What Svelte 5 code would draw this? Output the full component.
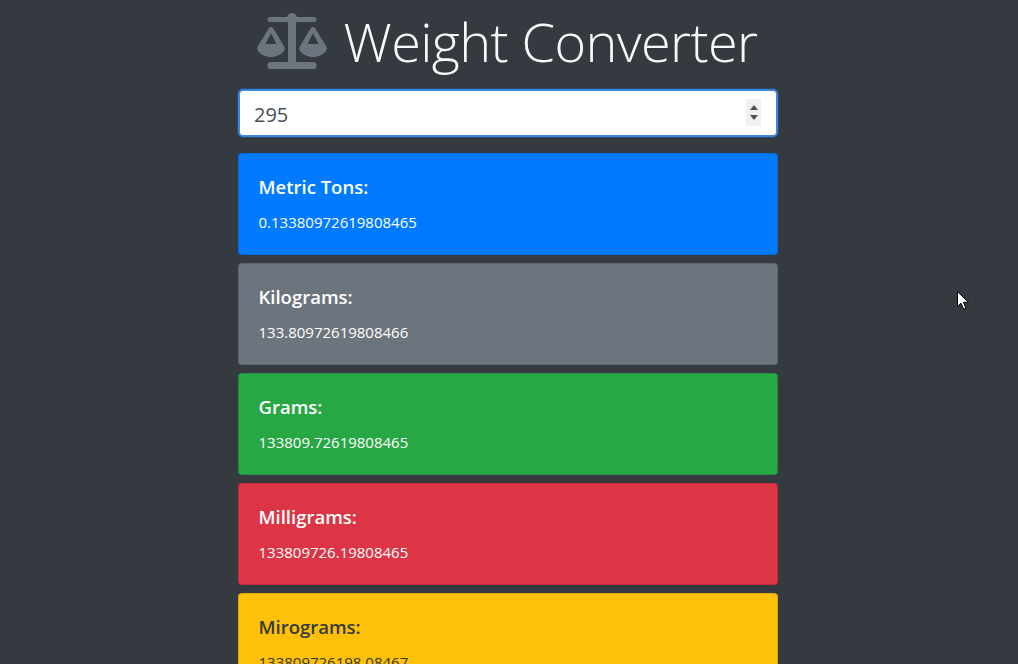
<script lang="ts">
	const results = [
		{ label: 'Metric Tons:', value: '0.13380972619808465', tone: 'primary' },
		{ label: 'Kilograms:', value: '133.80972619808466', tone: 'secondary' },
		{ label: 'Grams:', value: '133809.72619808465', tone: 'success' },
		{ label: 'Milligrams:', value: '133809726.19808465', tone: 'danger' },
		{ label: 'Mirograms:', value: '133809726198.08467', tone: 'warning' }
	];

	let pounds = $state(295);
</script>

<div class="page">
	<main class="container">
		<h1 class="title">
			<svg class="scale" viewBox="0 0 70 56" aria-hidden="true">
				<path
					d="M35 0c2.400 0 4.300 1.600 5 4h17c1.400 0 2.500 1.100 2.500 2.500S58.400 9 57 9H39v40h18c1.400 0 2.500 1.100 2.500 2.500v2c0 1.400-1.100 2.500-2.500 2.500H13c-1.400 0-2.500-1.100-2.500-2.500v-2c0-1.400 1.100-2.500 2.500-2.500h18V9H13c-1.400 0-2.500-1.100-2.500-2.500S11.600 4 13 4h17c.7-2.400 2.600-4 5-4z"
				/>
				<path
					fill-rule="evenodd"
					d="M14 14c1 0 1.800.5 2.300 1.500L27 33c1 2 1 3.500 0 5-2.500 3.500-7.500 6-13 6S3.500 41.500 1 38c-1-1.500-1-3 0-5l10.700-17.500c.5-1 1.300-1.500 2.300-1.500zm0 6L8.500 31h11zM56 14c1 0 1.800.5 2.300 1.500L69 33c1 2 1 3.500 0 5-2.500 3.500-7.500 6-13 6s-10.500-2.500-13-6c-1-1.500-1-3 0-5l10.700-17.500c.5-1 1.300-1.500 2.300-1.500zm0 6l-5.500 11h11z"
				/>
			</svg>
			<span>Weight Converter</span>
		</h1>

		<div class="field">
			<input class="amount" type="number" bind:value={pounds} />
			<span class="spinner" aria-hidden="true">
				<i class="up"></i>
				<i class="down"></i>
			</span>
		</div>

		{#each results as result}
			<section class="card {result.tone}">
				<h4>{result.label}</h4>
				<p>{result.value}</p>
			</section>
		{/each}
	</main>

	<svg class="cursor" viewBox="0 0 12 19" aria-hidden="true">
		<path
			d="M.5.5v15l3.500-3.300 2.600 6 2.400-1-2.600-5.900h5z"
			fill="#fff"
			stroke="#000"
			stroke-width="1"
		/>
	</svg>
</div>

<style>
	:global(html),
	:global(body) {
		margin: 0;
		height: 100%;
		overflow: hidden;
	}

	:global(body) {
		background: #343a40;
		font-family: 'Open Sans', 'Noto Sans', sans-serif;
	}

	.page {
		position: relative;
		width: 1016px;
		height: 664px;
	}

	.container {
		width: 540px;
		margin: 0 auto;
	}

	.title {
		display: flex;
		align-items: center;
		justify-content: center;
		gap: 17px;
		height: 89px;
		box-sizing: border-box;
		padding: 0 2px 7px 0;
		margin: 0;
		font-size: 54px;
		font-weight: 300;
		line-height: 1.2;
		color: #f8f9fa;
		letter-spacing: -0.6px;
	}

	.scale {
		width: 70px;
		height: 56px;
		fill: #6c757d;
		flex: none;
	}

	.field {
		position: relative;
		margin-bottom: 16px;
	}

	.amount {
		display: block;
		width: 100%;
		height: 48px;
		box-sizing: border-box;
		padding: 10px 14px 8px;
		background: #fff;
		border: 2px solid #3f87d6;
		border-radius: 5px;
		box-shadow: 0 0 0 1px rgba(0, 123, 255, 0.25);
		outline: none;
		font-family: inherit;
		font-size: 20px;
		line-height: 1.5;
		color: #495057;
		appearance: textfield;
	}

	.amount::-webkit-inner-spin-button,
	.amount::-webkit-outer-spin-button {
		appearance: none;
		margin: 0;
	}

	.spinner {
		position: absolute;
		top: 10px;
		right: 17px;
		width: 15px;
		height: 27px;
		display: flex;
		flex-direction: column;
		align-items: center;
		justify-content: center;
		gap: 5px;
		background: #f1f1f1;
	}

	.spinner i {
		width: 0;
		height: 0;
		border-left: 4px solid transparent;
		border-right: 4px solid transparent;
	}

	.spinner .up {
		border-bottom: 5px solid #505050;
	}

	.spinner .down {
		border-top: 5px solid #505050;
	}

	.card {
		height: 102px;
		box-sizing: border-box;
		margin-bottom: 8px;
		padding: 22px 19.500px 0;
		border: 1px solid rgba(0, 0, 0, 0.125);
		border-radius: 4px;
		color: #fff;
	}

	.card h4 {
		margin: 0 0 13px;
		font-size: 18.500px;
		font-weight: 600;
		line-height: 1.2;
	}

	.card p {
		margin: 0;
		font-size: 15px;
		line-height: 1.5;
	}

	.primary {
		background: #007bff;
	}

	.secondary {
		background: #6c757d;
	}

	.success {
		background: #28a745;
	}

	.danger {
		background: #dc3545;
	}

	.warning {
		background: #ffc107;
		color: #343a40;
	}

	.cursor {
		position: absolute;
		left: 957px;
		top: 291px;
		width: 12px;
		height: 19px;
	}
</style>
